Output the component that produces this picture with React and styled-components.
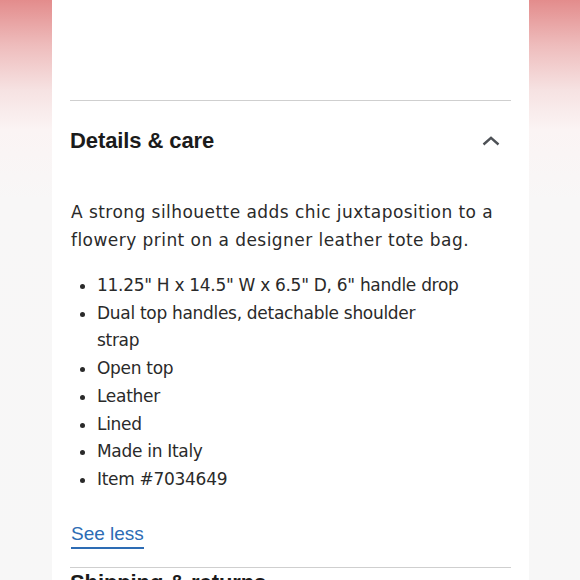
import React from "react";
import styled, { createGlobalStyle } from "styled-components";

const Global = createGlobalStyle`
  html, body {
    margin: 0;
    padding: 0;
    background: #ffffff;
  }
  body {
    font-family: "Liberation Sans", Arial, sans-serif;
    -webkit-font-smoothing: antialiased;
  }
`;

const Page = styled.div`
  display: grid;
  grid-template-columns: 52px 1fr 51px;
  width: 580px;
  height: 580px;
  overflow: hidden;
`;

const Side = styled.div`
  background: linear-gradient(
    to bottom,
    #e38c8c 0px,
    #eebcbc 45px,
    #f6e2e2 90px,
    #fbf4f4 130px,
    #f8f7f7 200px,
    #f7f7f7 100%
  );
`;

const Panel = styled.div`
  background: #ffffff;
  padding: 0 18px;
  display: flex;
  flex-direction: column;
`;

const TopSpace = styled.div`
  height: 100px;
  flex-shrink: 0;
`;

const Divider = styled.hr`
  margin: 0;
  border: none;
  border-top: 1px solid #cfcfcf;
  flex-shrink: 0;
`;

const Header = styled.div`
  height: 80px;
  display: flex;
  align-items: center;
  justify-content: space-between;
  flex-shrink: 0;
`;

const Title = styled.h2`
  margin: 0;
  font-size: 22px;
  font-weight: 700;
  color: #1b1b1b;
  letter-spacing: -0.1px;
`;

const Toggle = styled.button`
  border: none;
  background: none;
  padding: 0;
  margin-right: 10px;
  width: 20px;
  height: 20px;
  display: flex;
  align-items: center;
  justify-content: center;
  color: #4d5156;
`;

const Body = styled.div`
  padding-top: 17px;
  color: #2a2a2a;
  font-family: "DejaVu Sans", "Liberation Sans", sans-serif;
  font-size: 17px;
  line-height: 28px;
`;

const Text = styled.p`
  margin: 0 0 18px 1px;
  letter-spacing: 0.45px;
`;

const List = styled.ul`
  margin: 0;
  padding: 0 0 0 27px;
  max-width: 345px;
  line-height: 27.7px;
  letter-spacing: -0.3px;
`;

const Item = styled.li`
  white-space: ${(p) => (p.$nowrap ? "nowrap" : "normal")};
`;

const More = styled.a`
  display: inline-block;
  margin-top: 28px;
  margin-left: 1px;
  color: #2d6cb4;
  font-family: "Liberation Sans", Arial, sans-serif;
  font-size: 19px;
  line-height: 24px;
  text-decoration: none;
  border-bottom: 2px solid #2d6cb4;
  padding-bottom: 1px;
  cursor: pointer;
`;

const Footer = styled.div`
  margin-top: 18px;
`;

const NextTitle = styled(Title)`
  padding-top: 2px;
`;

const items = [
  { text: '11.25" H x 14.5" W x 6.5" D, 6" handle drop', nowrap: true },
  { text: "Dual top handles, detachable shoulder strap" },
  { text: "Open top" },
  { text: "Leather" },
  { text: "Lined" },
  { text: "Made in Italy" },
  { text: "Item #7034649" },
];

export default function App() {
  return (
    <>
      <Global />
      <Page>
        <Side />
        <Panel>
          <TopSpace />
          <Divider />
          <Header>
            <Title>Details &amp; care</Title>
            <Toggle aria-label="Collapse">
              <svg width="18" height="10" viewBox="0 0 18 10" fill="none">
                <path
                  d="M1.5 8.5 L9 1.8 L16.5 8.5"
                  stroke="currentColor"
                  strokeWidth="2.4"
                />
              </svg>
            </Toggle>
          </Header>
          <Body>
            <Text>
              A strong silhouette adds chic juxtaposition to a flowery print on
              a designer leather tote bag.
            </Text>
            <List>
              {items.map((it) => (
                <Item key={it.text} $nowrap={it.nowrap}>
                  {it.text}
                </Item>
              ))}
            </List>
            <More>See less</More>
          </Body>
          <Footer>
            <Divider />
            <NextTitle>Shipping &amp; returns</NextTitle>
          </Footer>
        </Panel>
        <Side />
      </Page>
    </>
  );
}
